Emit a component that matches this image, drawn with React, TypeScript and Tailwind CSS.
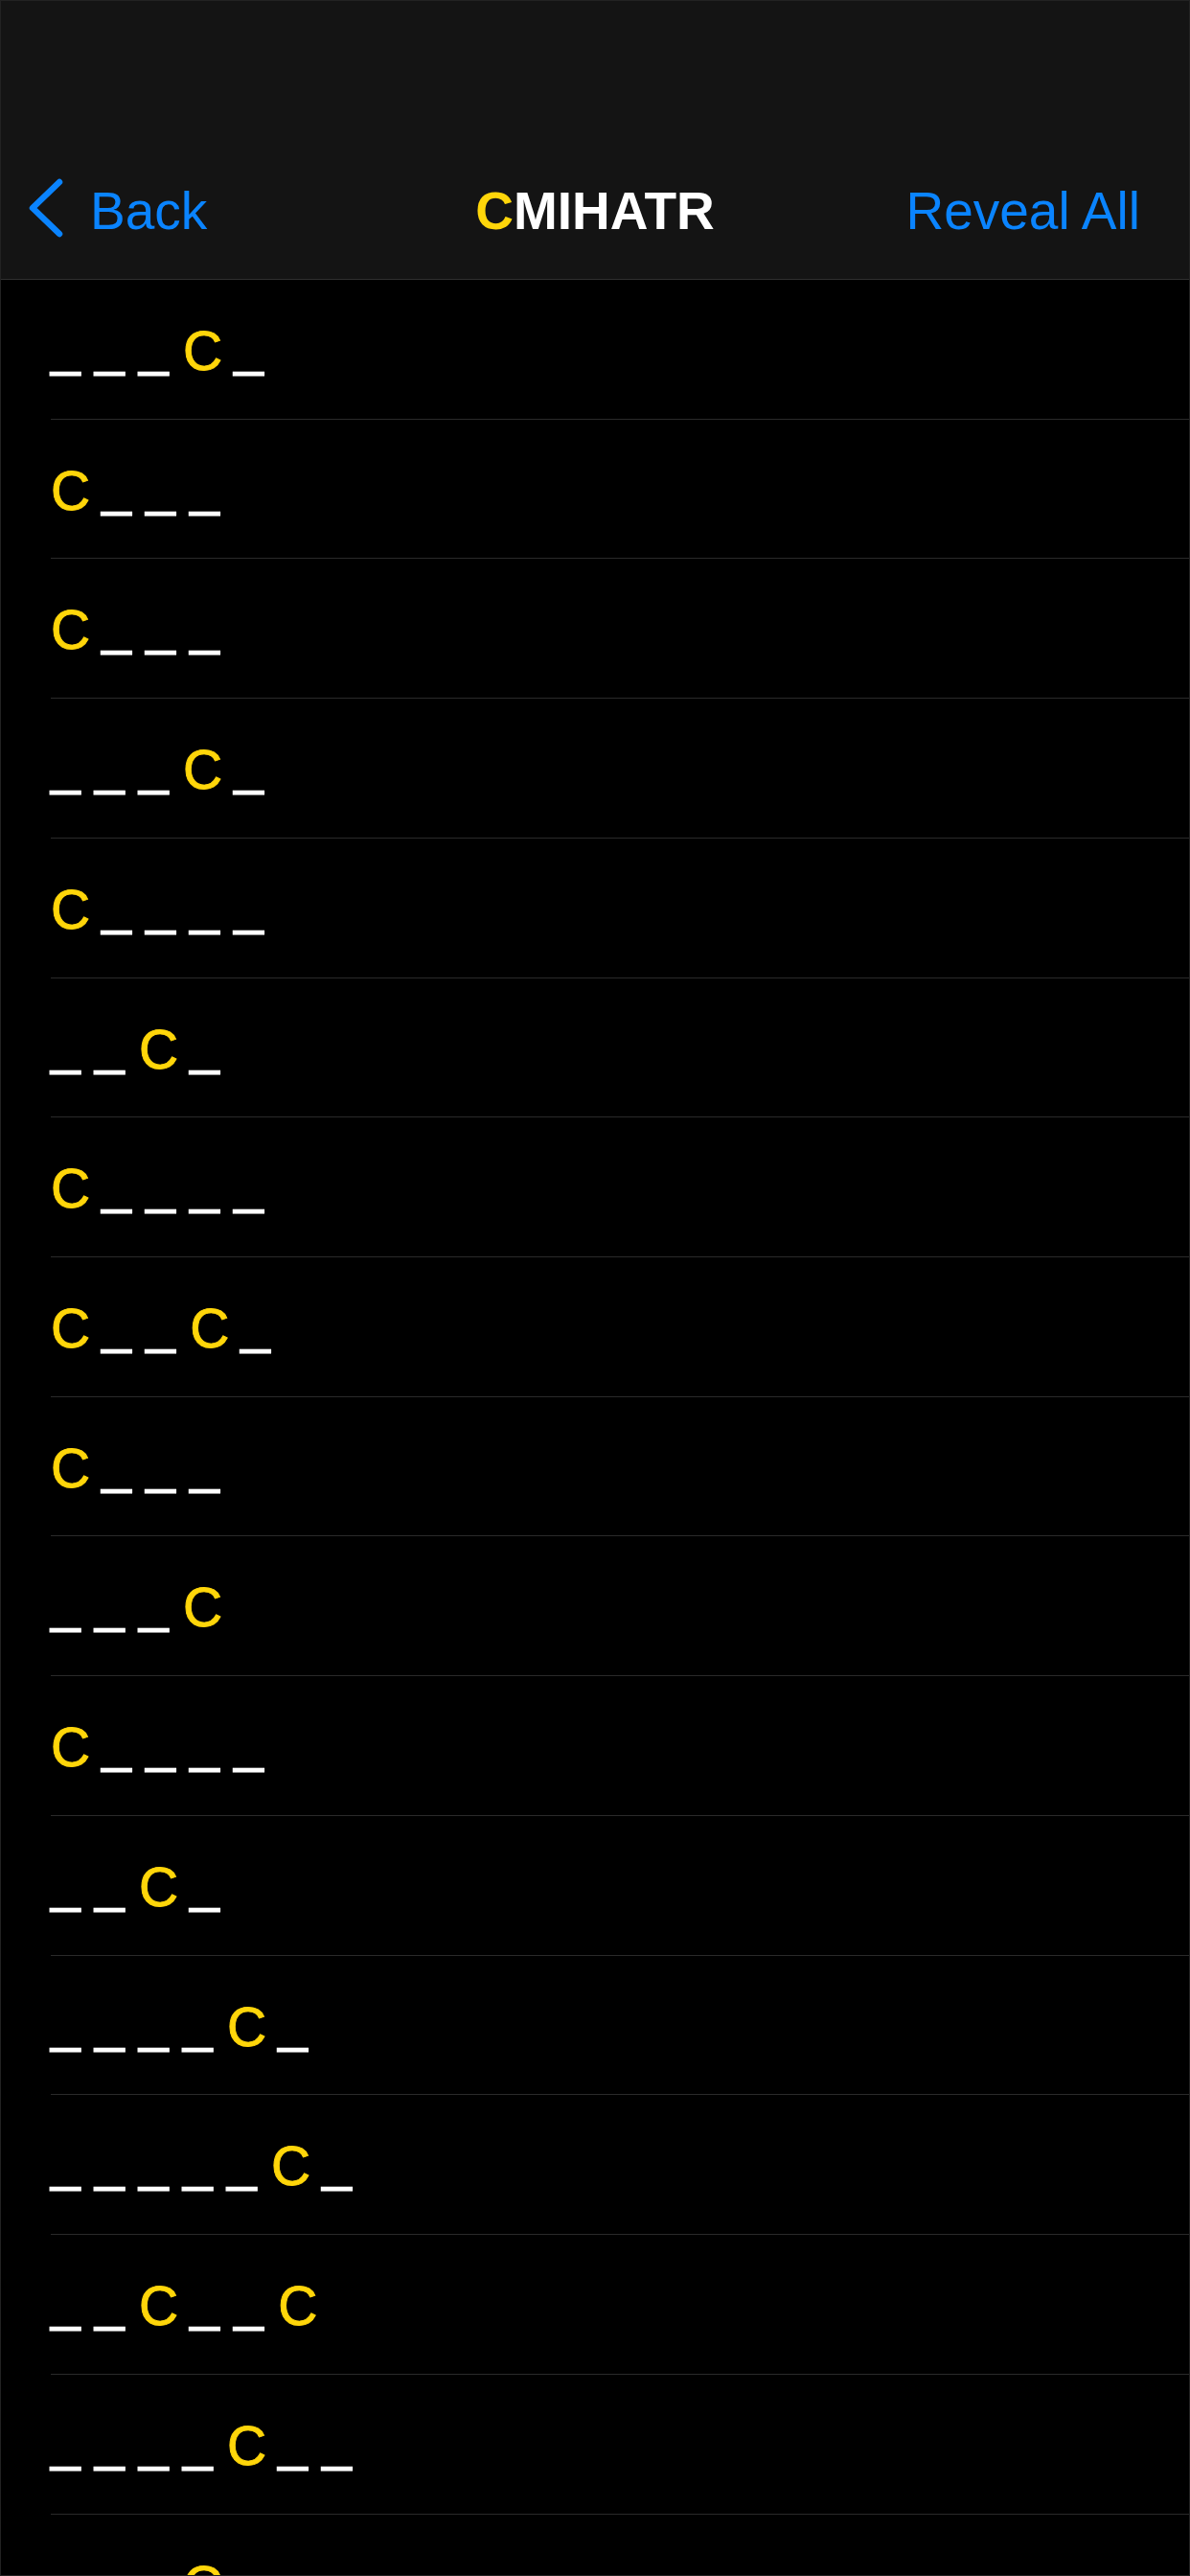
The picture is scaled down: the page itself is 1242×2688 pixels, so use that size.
import React from "react";

const rows = [
  "___C_",
  "C___",
  "C___",
  "___C_",
  "C____",
  "__C_",
  "C____",
  "C__C_",
  "C___",
  "___C",
  "C____",
  "__C_",
  "____C_",
  "_____C_",
  "__C__C",
  "____C__",
  "___C_",
];

function Row({ pattern }: { pattern: string }) {
  return (
    <div className="ml-[52px] h-[145.73px] shrink-0 border-b border-[#2a2a2a] pt-[46px] flex items-baseline gap-[12px]">
      {pattern.split("").map((ch, i) =>
        ch === "_" ? (
          <span
            key={i}
            className="block w-[34px] text-[55px] leading-none text-white [-webkit-text-stroke:1.2px_white] -translate-y-[5px]"
          >
            _
          </span>
        ) : (
          <span
            key={i}
            className="block text-[57px] leading-none text-[#FFD60A] [-webkit-text-stroke:0.9px_#FFD60A]"
          >
            {ch}
          </span>
        )
      )}
    </div>
  );
}

export default function App() {
  return (
    <div className="w-[1242px] h-[2688px] overflow-hidden bg-black border border-[#222222] flex flex-col font-['Liberation_Sans',Arial,sans-serif]">
      <header className="h-[291px] shrink-0 bg-[#141414] border-b border-[#303030] pt-[183px]">
        <div className="grid grid-cols-[1fr_auto_1fr] items-start h-[66px]">
          <div className="flex items-start">
            <svg
              className="ml-[27px] w-[40px] h-[66px] shrink-0"
              viewBox="0 0 40 66"
              fill="none"
              stroke="#0A84FF"
              strokeWidth="6.5"
              strokeLinecap="round"
              strokeLinejoin="round"
            >
              <polyline points="34,6 6,33 34,60" />
            </svg>
            <span className="ml-[26px] mt-[9px] text-[55px] leading-none text-[#0A84FF]">Back</span>
          </div>
          <div className="mt-[9px] text-[55px] leading-none font-bold text-white">
            <span className="text-[#FFD60A]">C</span>MIHATR
          </div>
          <div className="flex justify-end pr-[51px]">
            <span className="mt-[9px] text-[55px] leading-none text-[#0A84FF]">Reveal All</span>
          </div>
        </div>
      </header>
      {rows.map((r, i) => (
        <Row key={i} pattern={r} />
      ))}
    </div>
  );
}
